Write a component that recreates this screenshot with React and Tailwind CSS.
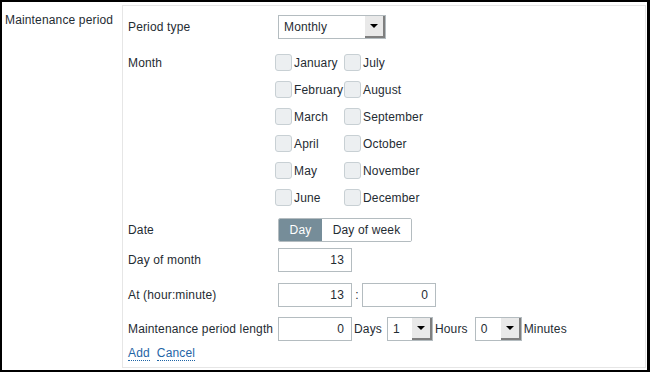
import React from 'react';

const months = [
    ['January', 'July'],
    ['February', 'August'],
    ['March', 'September'],
    ['April', 'October'],
    ['May', 'November'],
    ['June', 'December'],
];

const Checkbox = ({ label, width }) => (
    <label className={`flex items-center ${width}`}>
        <span className="w-[17px] h-[17px] shrink-0 rounded-[3px] border border-[#c8d0d4] bg-[#eceff1]"></span>
        <span className="ml-[2px] whitespace-nowrap">{label}</span>
    </label>
);

const Select = ({ value, width }) => (
    <div className={`flex h-[24px] ${width} border border-[#b4bcc0] bg-white`}>
        <span className="flex-1 pl-[5px] leading-[22px]">{value}</span>
        <span className="w-[20px] h-full flex items-center justify-center bg-[#e9e9e9] border-r-2 border-b-2 border-[#7f7f7f]">
            <span className="w-0 h-0 border-l-[4px] border-r-[4px] border-t-[4px] border-l-transparent border-r-transparent border-t-black"></span>
        </span>
    </div>
);

const NumInput = ({ value }) => (
    <div className="w-[74px] h-[24px] border border-[#b4bcc0] bg-white text-right pr-[7px] leading-[22px]">{value}</div>
);

const Row = ({ label, mt, children }) => (
    <div className={`flex items-center ${mt}`}>
        <div className="w-[150px] shrink-0">{label}</div>
        {children}
    </div>
);

export default function App() {
    return (
        <div className="w-[650px] h-[372px] overflow-hidden bg-white border-t-2 border-l-2 border-r-[3px] border-b-2 border-black font-['Liberation_Sans',Arial,sans-serif] text-[12px] tracking-[0.15px] text-[#1f2c33]">
            <div className="flex pt-[3px] h-full">
                <div className="w-[120px] shrink-0 pl-[3px] pt-[6px]">Maintenance period</div>
                <div className="w-[524px] h-[363px] border border-[#e6e6e6] pl-[5px]">
                    <Row label="Period type" mt="mt-[9px]">
                        <Select value="Monthly" width="w-[108px]" />
                    </Row>

                    <div className="flex mt-[10px]">
                        <div className="w-[147px] shrink-0 h-[27px] flex items-center">Month</div>
                        <div className="flex flex-col">
                            {months.map(([a, b]) => (
                                <div key={a} className="flex items-center h-[27px]">
                                    <Checkbox label={a} width="w-[69px]" />
                                    <Checkbox label={b} width="" />
                                </div>
                            ))}
                        </div>
                    </div>

                    <Row label="Date" mt="mt-[7px]">
                        <div className="flex h-[24px] rounded-[2px] overflow-hidden border border-[#b4bcc0]">
                            <span className="w-[43px] bg-[#768d99] text-white flex items-center justify-center">Day</span>
                            <span className="w-[89px] bg-white flex items-center justify-center">Day of week</span>
                        </div>
                    </Row>

                    <Row label="Day of month" mt="mt-[6px]">
                        <NumInput value="13" />
                    </Row>

                    <Row label="At (hour:minute)" mt="mt-[11px]">
                        <NumInput value="13" />
                        <span className="w-[10px] text-center">:</span>
                        <NumInput value="0" />
                    </Row>

                    <Row label="Maintenance period length" mt="mt-[10px]">
                        <NumInput value="0" />
                        <span className="ml-[2px] mr-[5px]">Days</span>
                        <Select value="1" width="w-[46px]" />
                        <span className="ml-[2px] mr-[7px]">Hours</span>
                        <Select value="0" width="w-[47px]" />
                        <span className="ml-[2px]">Minutes</span>
                    </Row>

                    <div className="flex gap-[7px] mt-[5px] text-[#1f65a6]">
                        <a className="border-b border-dotted border-[#1f65a6] leading-[14px]">Add</a>
                        <a className="border-b border-dotted border-[#1f65a6] leading-[14px]">Cancel</a>
                    </div>
                </div>
            </div>
        </div>
    );
}
